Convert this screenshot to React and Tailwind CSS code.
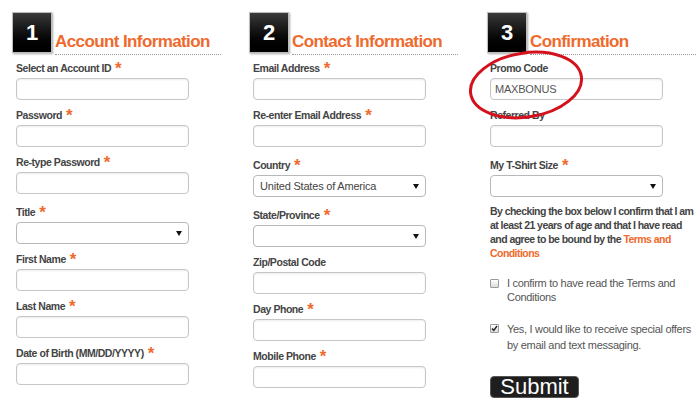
const ORANGE = "text-[#ee6a2d]";

function NumBox({ n }) {
  return (
    <div className="w-[40px] h-[41px] shrink-0 border border-[#bdbdbd] shadow-[1px_1px_2px_rgba(0,0,0,0.35)] bg-gradient-to-b from-[#3a3a3a] via-[#111] to-[#000] flex items-center justify-center">
      <span className="text-white font-bold text-[22px] leading-none">{n}</span>
    </div>
  );
}

function Header({ n, title }) {
  return (
    <div className="flex items-start">
      <NumBox n={n} />
      <div className={"ml-[3px] mt-[20px] w-[166px] border-b border-dotted border-[#9a9a9a] pb-[2px] text-[17px] leading-[20px] font-bold tracking-[-0.6px] whitespace-nowrap " + ORANGE}>
        {title}
      </div>
    </div>
  );
}

function Label({ text, req }) {
  return (
    <div className="h-[16px] leading-[16px] text-[10.5px] font-bold text-[#444] tracking-[-0.45px] mb-[2px] whitespace-nowrap">
      {text}
      {req && <span className={"ml-[4px] text-[17px] leading-[0] relative top-[2px] " + ORANGE}>*</span>}
    </div>
  );
}

function Input({ value }) {
  return (
    <div className="w-[173px] h-[22px] border border-[#c6c6c6] rounded-[4px] bg-white shadow-[inset_0_1px_2px_rgba(0,0,0,0.08)] flex items-center px-[4px] text-[11px] text-[#555] tracking-[-0.2px]">
      {value}
    </div>
  );
}

function Select({ value }) {
  return (
    <div className="w-[173px] h-[22px] border border-[#b8b8b8] rounded-[4px] bg-white flex items-center justify-between pl-[6px] pr-[6px] text-[11px] text-[#444] tracking-[-0.2px]">
      <span>{value}</span>
      <svg width="6" height="5" viewBox="0 0 6 5"><path d="M0 0h6L3 5z" fill="#111" /></svg>
    </div>
  );
}

function Field({ label, req, select, value }) {
  return (
    <div className={"mb-[7px] " + (select ? "pt-[3px]" : "")}>
      <Label text={label} req={req} />
      {select ? <Select value={value} /> : <Input value={value} />}
    </div>
  );
}

function Checkbox({ checked }) {
  return (
    <div className="w-[9px] h-[9px] mt-[3px] shrink-0 border border-[#9a9a9a] rounded-[1px] bg-gradient-to-b from-white to-[#dcdcdc] flex items-center justify-center">
      {checked && (
        <svg width="7" height="7" viewBox="0 0 7 7"><path d="M1 3.5l1.8 2L6 1" stroke="#222" strokeWidth="1.4" fill="none" /></svg>
      )}
    </div>
  );
}

export default function App() {
  return (
    <div className="relative w-[700px] h-[406px] bg-white overflow-hidden" style={{ fontFamily: '"Liberation Sans", Arial, sans-serif' }}>
      <div className="flex pt-[12px] pl-[12px]">
        <div className="w-[237px]">
          <Header n="1" title="Account Information" />
          <div className="pl-[4px] pt-[5px]">
            <Field label="Select an Account ID" req />
            <Field label="Password" req />
            <Field label="Re-type Password" req />
            <Field label="Title" req select />
            <Field label="First Name" req />
            <Field label="Last Name" req />
            <Field label="Date of Birth (MM/DD/YYYY)" req />
          </div>
        </div>

        <div className="w-[238px]">
          <Header n="2" title="Contact Information" />
          <div className="pl-[4px] pt-[5px]">
            <Field label="Email Address" req />
            <Field label="Re-enter Email Address" req />
            <Field label="Country" req select value="United States of America" />
            <Field label="State/Province" req select />
            <Field label="Zip/Postal Code" />
            <Field label="Day Phone" req />
            <Field label="Mobile Phone" req />
          </div>
        </div>

        <div className="w-[213px]">
          <Header n="3" title="Confirmation" />
          <div className="pl-[3px] pt-[5px]">
            <Field label="Promo Code" value="MAXBONUS" />
            <Field label="Referred By" />
            <Field label="My T-Shirt Size" req select />
            <p className="mt-[1px] w-[206px] text-[10.5px] leading-[14px] font-bold text-[#444] tracking-[-0.55px]">
              By checking the box below I confirm that I am at least 21 years of age and that I have read and agree to be bound by the{" "}
              <span className={ORANGE}>Terms and Conditions</span>
            </p>
            <div className="flex gap-[8px] mt-[16px] text-[11px] leading-[14px] text-[#555] tracking-[-0.3px]">
              <Checkbox />
              <span>I confirm to have read the Terms and Conditions</span>
            </div>
            <div className="flex gap-[8px] mt-[17px] text-[11px] leading-[16px] text-[#555] tracking-[-0.3px]">
              <Checkbox checked />
              <span>Yes, I would like to receive special offers by email and text messaging.</span>
            </div>
            <button className="mt-[23px] w-[89px] h-[22px] rounded-[4px] bg-[#1e1e1e] border border-[#555] text-white text-[22px] leading-none flex items-center justify-center">
              Submit
            </button>
          </div>
        </div>
      </div>

      <svg className="absolute left-[462px] top-[47px]" width="130" height="80" viewBox="0 0 130 80">
        <ellipse cx="64" cy="38" rx="56" ry="32" transform="rotate(-9 64 38)" fill="none" stroke="#d4121e" strokeWidth="3" />
      </svg>
    </div>
  );
}
